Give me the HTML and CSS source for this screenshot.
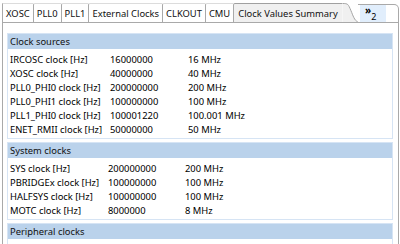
FILE: index.html
```html
<!DOCTYPE html>
<html>
<head>
    <meta charset="UTF-8">
    <title>Clock Values Summary</title>
    <link rel="stylesheet" href="styles.css">
</head>
<body>
    <div class="folder">
        <div class="tabs">
            <div class="tab first">XOSC</div>
            <div class="tab">PLL0</div>
            <div class="tab">PLL1</div>
            <div class="tab">External Clocks</div>
            <div class="tab">CLKOUT</div>
            <div class="tab">CMU</div>
            <div class="tab active">Clock Values Summary</div>
            <svg class="curve" width="16" height="20" viewBox="0 0 16 20">
                <path d="M0 0.5 C6 0.5 6 1 9 8 C11 13 13 19 16 19.5 L16 20 L0 20 Z" fill="#f0f0f0"/>
                <path d="M0 0.5 C6 0.5 6 1 9 8 C11 13 13 19 16 19.5" fill="none" stroke="#a0a0a0"/>
            </svg>
            <div class="tab-rest">
                <div class="chevron">&raquo;<sub>2</sub></div>
            </div>
        </div>
        <div class="body">
            <div class="section">
                <div class="section-title">Clock sources</div>
                <div class="grid">
                    <span>IRCOSC clock [Hz]</span><span>16000000</span><span>16 MHz</span>
                    <span>XOSC clock [Hz]</span><span>40000000</span><span>40 MHz</span>
                    <span>PLL0_PHI0 clock [Hz]</span><span>200000000</span><span>200 MHz</span>
                    <span>PLL0_PHI1 clock [Hz]</span><span>100000000</span><span>100 MHz</span>
                    <span>PLL1_PHI0 clock [Hz]</span><span>100001220</span><span>100.001 MHz</span>
                    <span>ENET_RMII clock [Hz]</span><span>50000000</span><span>50 MHz</span>
                </div>
            </div>
            <div class="section">
                <div class="section-title">System clocks</div>
                <div class="grid narrow">
                    <span>SYS clock [Hz]</span><span>200000000</span><span>200 MHz</span>
                    <span>PBRIDGEx clock [Hz]</span><span>100000000</span><span>100 MHz</span>
                    <span>HALFSYS clock [Hz]</span><span>100000000</span><span>100 MHz</span>
                    <span>MOTC clock [Hz]</span><span>8000000</span><span>8 MHz</span>
                </div>
            </div>
            <div class="section">
                <div class="section-title">Peripheral clocks</div>
                <div class="grid"></div>
            </div>
        </div>
    </div>
</body>
</html>
```

FILE: styles.css
```css
*{
    margin: 0;
    padding: 0;
    box-sizing: border-box;
}
body{
    width: 400px;
    height: 244px;
    overflow: hidden;
    background: #fff;
    font: 9.4px/14px "Noto Sans", "Open Sans", sans-serif;
    color: #000;
}
.folder{
    margin: 0 1px 0 2px;
    height: 244px;
    display: flex;
    flex-direction: column;
}
.tabs{
    display: flex;
    align-items: flex-end;
    height: 23px;
    flex: none;
}
.tab{
    height: 20px;
    line-height: 19px;
    padding: 0 3px;
    border-left: 1px solid #a9a9a9;
    border-top: 1px solid #dcdcdc;
    border-bottom: 1px solid #a9a9a9;
    border-top-left-radius: 2px;
    white-space: nowrap;
    color: #111;
}
.tab.first{
    border-top-left-radius: 0;
}
.tab.active{
    background: #f0f0f0;
    border-top-color: #a0a0a0;
    padding: 0 4px;
}
.curve{
    display: block;
    flex: none;
    border-bottom: 1px solid #a9a9a9;
    height: 20px;
}
.tab-rest{
    flex: 1;
    height: 19px;
    border-top: 1px solid #a9a9a9;
    border-right: 1px solid #a9a9a9;
    border-bottom: 1px solid #a9a9a9;
    border-top-right-radius: 5px;
    display: flex;
    justify-content: flex-end;
    align-items: flex-end;
    padding-right: 12px;
}
.chevron{
    width: 26px;
    height: 17px;
    background: #e1eefc;
    font-size: 10px;
    line-height: 10px;
    padding-left: 5px;
    font-weight: bold;
}
.chevron sub{
    font-size: 9px;
    font-weight: normal;
    vertical-align: -6px;
}
.body{
    flex: 1;
    border-left: 1px solid #a9a9a9;
    border-right: 1px solid #a9a9a9;
    padding: 10px 5px 0 4px;
    display: flex;
    flex-direction: column;
    gap: 3px;
}
.section{
    border: 1px solid #d6e4f4;
}
.section-title{
    height: 15px;
    line-height: 15px;
    background: #bad2eb;
    padding-left: 2px;
    color: #111;
}
.grid{
    display: grid;
    grid-template-columns: 100px 78px 1fr;
    padding: 4px 2px 1px;
}
.grid.narrow{
    grid-template-columns: 98px 77px 1fr;
}
.grid span{
    height: 14px;
    white-space: nowrap;
}
```
